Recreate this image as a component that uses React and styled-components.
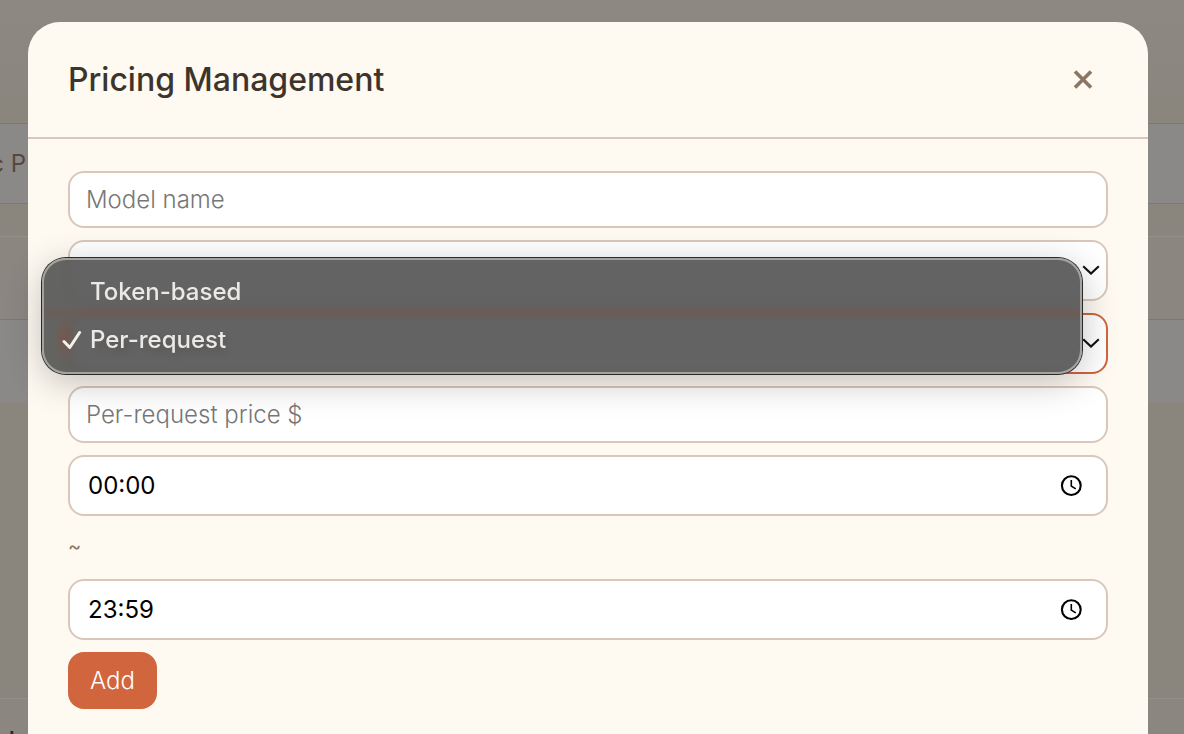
import { useState } from 'react';
import styled, { createGlobalStyle, ThemeProvider } from 'styled-components';

const theme = {
  colors: {
    page: '#8a867e',
    band: '#8b8988',
    bandLine: '#7d7872',
    surface: '#fef9f1',
    border: '#d9c8ba',
    accent: '#d0653e',
    title: '#3d352c',
    muted: '#8b7565',
    placeholder: '#777777',
  },
  fonts: {
    main: '"Inter", "Liberation Sans", sans-serif',
  },
};

const billingModes = ['Token-based', 'Per-request'];

export default function App() {
  const [mode, setMode] = useState('Per-request');
  const [start, setStart] = useState('00:00');
  const [end, setEnd] = useState('23:59');

  return (
    <ThemeProvider theme={theme}>
      <GlobalStyle />
      <Page>
        <Band $height={81} $edge>
          <BandLabel>c P</BandLabel>
        </Band>
        <Band $space={32} $height={83} $plain />
        <Band $height={83} />
        <Band $space={296} $height={84} $plain>
          <BandTitle>d</BandTitle>
        </Band>
      </Page>
      <Overlay>
        <Modal role="dialog" aria-labelledby="pricing-title">
          <Header>
            <Title id="pricing-title">Pricing Management</Title>
            <CloseButton type="button" aria-label="Close">
              <CloseIcon />
            </CloseButton>
          </Header>
          <Form onSubmit={(e) => e.preventDefault()}>
            <TextInput placeholder="Model name" aria-label="Model name" />
            <Field>
              <Select aria-label="Model type">
                <option value=""></option>
              </Select>
              <SelectArrow />
            </Field>
            <Field>
              <Select
                $open
                aria-label="Billing mode"
                value={mode}
                onChange={(e) => setMode(e.target.value)}
              >
                {billingModes.map((item) => (
                  <option key={item}>{item}</option>
                ))}
              </Select>
              <SelectArrow />
              <Menu role="listbox" aria-label="Billing mode">
                {billingModes.map((item) => (
                  <MenuItem
                    key={item}
                    type="button"
                    role="option"
                    aria-selected={item === mode}
                    onClick={() => setMode(item)}
                  >
                    <CheckSlot>{item === mode && <CheckIcon />}</CheckSlot>
                    {item}
                  </MenuItem>
                ))}
              </Menu>
            </Field>
            <TextInput
              placeholder="Per-request price $"
              aria-label="Per-request price"
            />
            <TimeField label="Start time" value={start} onChange={setStart} />
            <Separator>~</Separator>
            <TimeField label="End time" value={end} onChange={setEnd} />
            <AddButton type="submit">Add</AddButton>
          </Form>
        </Modal>
      </Overlay>
    </ThemeProvider>
  );
}

function TimeField({ label, value, onChange }) {
  return (
    <TimeBox>
      <TimeInput
        aria-label={label}
        value={value}
        onChange={(e) => onChange(e.target.value)}
      />
      <ClockButton type="button" aria-label={`Pick ${label}`}>
        <svg width="22" height="22" viewBox="0 0 22 22" fill="none" stroke="#000">
          <circle cx="11.3" cy="10.6" r="9.4" strokeWidth="2.1" />
          <path d="M11.3 5.1v6l4.5 2.8" strokeWidth="1.6" />
        </svg>
      </ClockButton>
    </TimeBox>
  );
}

function SelectArrow() {
  return (
    <Arrow width="18" height="10" viewBox="0 0 18 10" fill="none">
      <path d="M1.2 1.2L9 8.6l7.8-7.4" stroke="#111" strokeWidth="2.1" />
    </Arrow>
  );
}

function CloseIcon() {
  return (
    <svg width="20" height="20" viewBox="0 0 20 20" fill="none">
      <path d="M2 1.6l16 16M18 1.6l-16 16" stroke="#8b7565" strokeWidth="3.6" />
    </svg>
  );
}

function CheckIcon() {
  return (
    <svg width="20" height="20" viewBox="0 0 20 20" fill="none">
      <path
        d="M2 12.5l5.8 6L17.6 3.5"
        stroke="#f3f0ed"
        strokeWidth="3"
        strokeLinecap="round"
        strokeLinejoin="round"
      />
    </svg>
  );
}

const GlobalStyle = createGlobalStyle`
  * {
    box-sizing: border-box;
  }
  body {
    margin: 0;
    overflow: hidden;
    background: ${theme.colors.page};
    font-family: ${theme.fonts.main};
  }
  button, input, select {
    font-family: inherit;
  }
`;

const Page = styled.div`
  height: 100vh;
  padding-top: 123px;
  overflow: hidden;
  background: linear-gradient(#8d8882, ${({ theme }) => theme.colors.page} 120px);
`;

const Band = styled.div`
  height: ${({ $height }) => $height}px;
  margin-top: ${({ $space = 0 }) => $space}px;
  display: flex;
  align-items: center;
  background: ${({ theme, $plain }) => ($plain ? '#8b8680' : theme.colors.band)};
  border-top: 1px solid
    ${({ theme, $plain }) => ($plain ? '#928e88' : theme.colors.bandLine)};
  border-bottom: ${({ theme, $edge }) =>
    $edge ? `1px solid ${theme.colors.bandLine}` : 'none'};
`;

const BandLabel = styled.span`
  display: flex;
  width: 26px;
  justify-content: flex-end;
  font-size: 24px;
  font-weight: 400;
  white-space: nowrap;
  color: #55483e;
`;

const BandTitle = styled.span`
  font-size: 24px;
  font-weight: 500;
  color: #2c2622;
`;

const Overlay = styled.div`
  position: fixed;
  inset: 0;
  overflow: hidden;
  padding: 22px 36px 0 28px;
`;

const Modal = styled.div`
  min-height: 100vh;
  background: ${({ theme }) => theme.colors.surface};
  border-radius: 32px 32px 0 0;
`;

const Header = styled.div`
  height: 117px;
  padding: 0 52px 0 40px;
  display: flex;
  align-items: center;
  justify-content: space-between;
  border-bottom: 2px solid ${({ theme }) => theme.colors.border};
`;

const Title = styled.h2`
  margin: 0;
  font-size: 32px;
  font-weight: 500;
  color: ${({ theme }) => theme.colors.title};
`;

const CloseButton = styled.button`
  width: 26px;
  height: 26px;
  padding: 0;
  display: flex;
  align-items: center;
  justify-content: center;
  border: none;
  background: none;
`;

const Form = styled.form`
  padding: 32px 40px;
  display: flex;
  flex-direction: column;
  gap: 12px;
`;

const TextInput = styled.input`
  width: 100%;
  height: 57px;
  padding: 0 16px;
  font-size: 24px;
  font-weight: 300;
  background: #ffffff;
  border: 2px solid ${({ theme }) => theme.colors.border};
  border-radius: 16px;
  outline: none;

  &::placeholder {
    color: ${({ theme }) => theme.colors.placeholder};
    opacity: 1;
  }
`;

const Field = styled.div`
  position: relative;
  display: flex;
`;

const Select = styled.select`
  appearance: none;
  width: 100%;
  height: 61px;
  padding: 0 26px;
  font-size: 24px;
  font-weight: 300;
  color: #000000;
  background: #ffffff;
  border: 2px solid
    ${({ theme, $open }) => ($open ? theme.colors.accent : theme.colors.border)};
  border-radius: 16px;
  outline: none;
`;

const Arrow = styled.svg`
  position: absolute;
  top: 25px;
  right: 8px;
  pointer-events: none;
`;

const Menu = styled.div`
  position: absolute;
  z-index: 1;
  left: -26px;
  bottom: 0;
  width: 100%;
  padding: 10px 0;
  border-radius: 24px;
  background:
    radial-gradient(
      ellipse 12px 24px at 22px 80px,
      rgba(140, 75, 50, 0.4),
      transparent
    ),
    linear-gradient(
      transparent 48px,
      rgba(125, 80, 65, 0.3) 55px,
      transparent 62px
    ),
    rgba(82, 82, 82, 0.9);
  backdrop-filter: blur(4px);
  box-shadow:
    inset 0 0 0 2px #a5a39f,
    0 0 0 1px #2b2a28,
    0 8px 36px rgba(0, 0, 0, 0.24);
`;

const MenuItem = styled.button`
  width: 100%;
  height: 48px;
  padding: 0 20px 2px;
  display: flex;
  align-items: center;
  gap: 8px;
  border: none;
  background: none;
  font-size: 24px;
  font-weight: 500;
  color: #ebe8e5;
`;

const CheckSlot = styled.span`
  width: 20px;
  display: flex;
`;

const TimeBox = styled.div`
  height: 61px;
  padding: 0 24px 0 18px;
  display: flex;
  align-items: center;
  background: #ffffff;
  border: 2px solid ${({ theme }) => theme.colors.border};
  border-radius: 16px;
`;

const TimeInput = styled.input`
  flex: 1;
  min-width: 0;
  padding: 0;
  font-size: 24px;
  font-weight: 400;
  color: #000000;
  border: none;
  outline: none;
  background: none;
`;

const ClockButton = styled.button`
  padding: 0;
  display: flex;
  border: none;
  background: none;
`;

const Separator = styled.span`
  height: 39px;
  line-height: 36px;
  font-size: 20px;
  color: ${({ theme }) => theme.colors.muted};
`;

const AddButton = styled.button`
  align-self: flex-start;
  height: 57px;
  padding: 0 22px;
  font-size: 24px;
  font-weight: 300;
  color: #ffffff;
  background: ${({ theme }) => theme.colors.accent};
  border: none;
  border-radius: 16px;
`;
